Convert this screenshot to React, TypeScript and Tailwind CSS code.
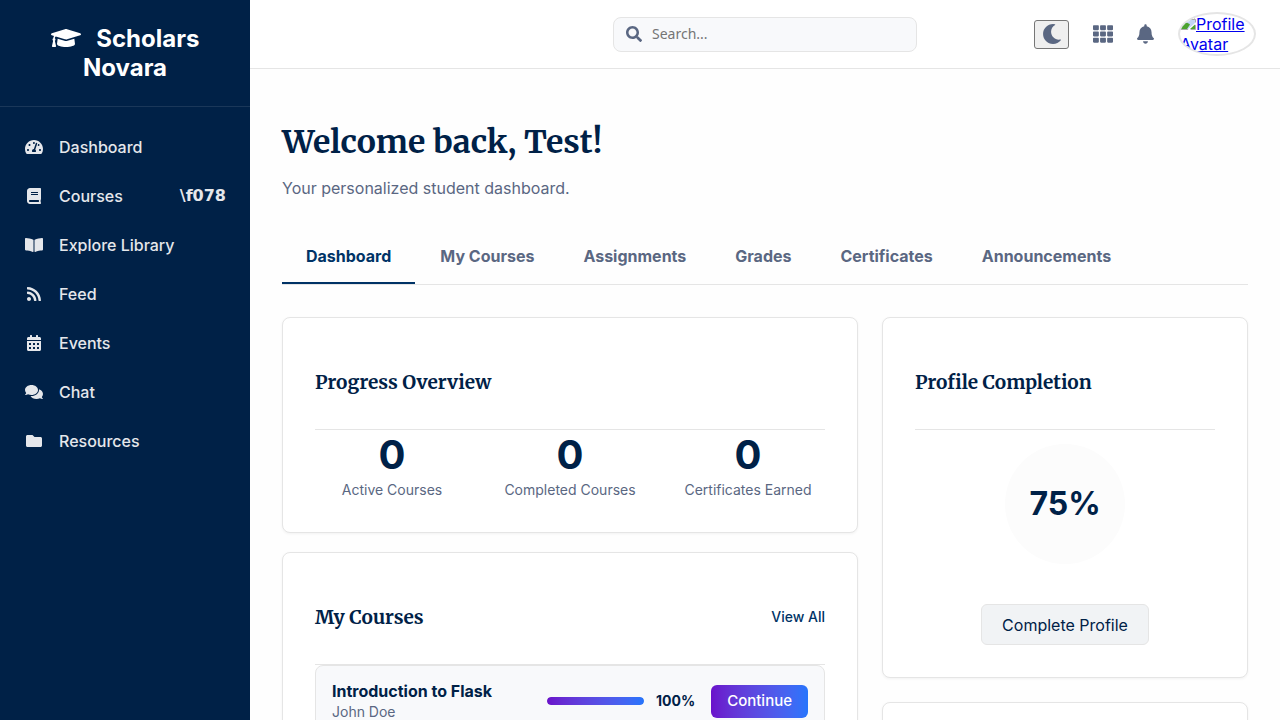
import type { ReactNode } from "react";
import type { IconType } from "react-icons";
import {
  FaBell,
  FaBook,
  FaBookOpen,
  FaCalendarAlt,
  FaComments,
  FaFolder,
  FaGraduationCap,
  FaMoon,
  FaRss,
  FaSearch,
  FaTachometerAlt,
  FaTh,
} from "react-icons/fa";

const navItems: { label: string; icon: IconType; suffix?: string }[] = [
  { label: "Dashboard", icon: FaTachometerAlt },
  { label: "Courses", icon: FaBook, suffix: "\\f078" },
  { label: "Explore Library", icon: FaBookOpen },
  { label: "Feed", icon: FaRss },
  { label: "Events", icon: FaCalendarAlt },
  { label: "Chat", icon: FaComments },
  { label: "Resources", icon: FaFolder },
];

const tabs = ["Dashboard", "My Courses", "Assignments", "Grades", "Certificates", "Announcements"];

const stats = [
  { value: 0, label: "Active Courses" },
  { value: 0, label: "Completed Courses" },
  { value: 0, label: "Certificates Earned" },
];

const courses = [{ title: "Introduction to Flask", teacher: "John Doe", progress: 100 }];

function Sidebar() {
  return (
    <aside className="w-[250px] shrink-0 bg-[#002147] text-[#e5e7eb]">
      <div className="border-b border-white/10 p-6 text-center">
        <a href="#" className="block text-2xl leading-[29px] font-bold text-white">
          <FaGraduationCap className="mr-2.5 inline h-6 w-[30px] align-[-3px]" aria-hidden /> Scholars Novara
        </a>
      </div>
      <nav className="flex flex-col pt-[15px]">
        {navItems.map(({ label, icon: Icon, suffix }) => (
          <a key={label} href="#" className="flex h-[49px] items-center px-6 font-medium">
            <span className="flex w-5 justify-center">
              <Icon className="h-4 w-[18px]" aria-hidden />
            </span>
            <span className="ml-[15px]">{label}</span>
            {suffix && <span className="ml-auto font-['DejaVu_Sans',sans-serif] font-bold">{suffix}</span>}
          </a>
        ))}
      </nav>
    </aside>
  );
}

function MissingImageIcon() {
  return (
    <svg width="16" height="16" viewBox="0 0 16 16" className="inline align-baseline" aria-hidden>
      <path d="M.5.5h10l5 5v10H.5z" fill="#fff" stroke="#a9a9a9" />
      <path d="M1 1h9v5h5v4L8 15H1z" fill="#c3d5f5" />
      <path d="M3 6.500c0-1 1-1.500 1.800-1.200C5.400 4 7.500 4.300 7.600 5.700 9 5.800 9 7.500 7.700 7.500H4C3.400 7.500 3 7 3 6.500z" fill="#fff" />
      <path d="M1 15v-3C3 8.500 7 7.500 10 10.500L7 15z" fill="#4da32f" />
      <path d="M10.500.5v5h5" fill="#fff" stroke="#a9a9a9" />
      <path d="M16 8 7.500 16H10l6-5.500z" fill="#fff" />
      <path d="M10 15h5v-4.500z" fill="#4da32f" />
    </svg>
  );
}

function TopBar() {
  return (
    <header className="flex h-[69px] shrink-0 items-center border-b border-[#e5e5e5] bg-white px-6">
      <div className="flex-1" />
      <label className="flex h-[35px] w-[304px] items-center rounded-lg border border-[#e5e5e5] bg-[#f8f9fb] px-3 text-[#5a6782]">
        <FaSearch className="size-4 shrink-0" aria-hidden />
        <input
          type="search"
          aria-label="Search"
          placeholder="Search..."
          className="ml-2.5 min-w-0 flex-1 bg-transparent font-['Noto_Sans',sans-serif] text-sm outline-none placeholder:text-[#757575]"
        />
      </label>
      <div className="flex flex-1 items-center justify-end gap-6 text-[#5a6782]">
        <button
          aria-label="Toggle dark mode"
          className="flex h-[29px] w-[35px] items-center justify-center rounded-[3px] border border-[#767676] bg-[#efefef]"
        >
          <FaMoon className="size-5" />
        </button>
        <a href="#" aria-label="Apps">
          <FaTh className="size-5" />
        </a>
        <a href="#" aria-label="Notifications">
          <FaBell className="h-5 w-[17px]" />
        </a>
        <a
          href="#"
          className="block h-11 w-[78px] overflow-hidden rounded-[50%] border-2 border-[#e5e5e5] leading-5 text-[#0000ee] underline"
        >
          <MissingImageIcon />
          Profile Avatar
        </a>
      </div>
    </header>
  );
}

function Card({ title, action, children }: { title?: string; action?: ReactNode; children?: ReactNode }) {
  return (
    <section className="rounded-lg border border-[#e5e5e5] bg-white px-8 pb-8 shadow-[0_1px_3px_rgba(0,0,0,0.05)]">
      {title && (
        <div className="flex h-28 items-center justify-between border-b border-[#e5e5e5] pt-4">
          <h2 className="font-[Merriweather,'Liberation_Serif',serif] text-[19px] leading-[30px] font-bold">{title}</h2>
          {action}
        </div>
      )}
      {children}
    </section>
  );
}

export default function App() {
  return (
    <div className="flex h-screen bg-white font-[Inter,sans-serif] text-base text-[#002147]">
      <Sidebar />
      <div className="flex min-w-0 flex-1 flex-col">
        <TopBar />
        <main className="min-h-0 flex-1 overflow-y-auto bg-[#fefefe] px-8 pt-[49px] [scrollbar-width:none]">
          <h1 className="font-[Merriweather,'Liberation_Serif',serif] text-[32px] leading-[48px] font-bold">
            Welcome back, Test!
          </h1>
          <p className="mt-2.5 text-[#5a6782]">Your personalized student dashboard.</p>

          <nav className="mt-[30px] flex gap-px border-b border-[#e5e5e5]">
            {tabs.map((tab, i) => (
              <button
                key={tab}
                className={
                  i === 0
                    ? "h-[54px] border-b-2 border-[#003366] px-6 font-bold text-[#003366]"
                    : "h-[54px] border-b-2 border-transparent px-6 font-bold text-[#5a6782]"
                }
              >
                {tab}
              </button>
            ))}
          </nav>

          <div className="mt-8 grid grid-cols-[minmax(0,1fr)_366px] items-start gap-6">
            <div className="flex flex-col gap-[19px]">
              <Card title="Progress Overview">
                <div className="grid grid-cols-3 gap-6 text-center">
                  {stats.map((s) => (
                    <div key={s.label} className="whitespace-nowrap">
                      <div className="text-[40px] leading-[50px] font-bold">{s.value}</div>
                      <div className="text-sm leading-5 text-[#5a6782]">{s.label}</div>
                    </div>
                  ))}
                </div>
              </Card>
              <Card
                title="My Courses"
                action={
                  <a href="#" className="text-sm font-medium text-[#003366]">
                    View All
                  </a>
                }
              >
                {courses.map((c) => (
                  <article
                    key={c.title}
                    className="flex items-center rounded-lg border border-[#e5e5e5] bg-[#f8f9fb] px-4 py-3.5"
                  >
                    <div className="flex-1">
                      <h3 className="leading-[22px] font-bold">{c.title}</h3>
                      <p className="text-sm text-[#5a6782]">{c.teacher}</p>
                    </div>
                    <div className="h-2 w-[97px] overflow-hidden rounded-full bg-[#e5e5e5]">
                      <div
                        className="h-full rounded-full bg-linear-to-r from-[#6a11cb] to-[#2575fc]"
                        style={{ width: `${c.progress}%` }}
                      />
                    </div>
                    <span className="ml-3 text-sm font-bold">{c.progress}%</span>
                    <button className="ml-4 h-[33px] rounded-md bg-linear-to-r from-[#6a11cb] to-[#2575fc] px-4 text-[15px] font-medium text-white">
                      Continue
                    </button>
                  </article>
                ))}
              </Card>
            </div>

            <div className="flex flex-col gap-6">
              <Card title="Profile Completion">
                <div className="flex flex-col items-center pt-3.5">
                  <div className="flex size-[120px] items-center justify-center rounded-full bg-[#fcfcfc] text-[32px] font-bold">
                    75%
                  </div>
                  <button className="mt-10 h-[41px] rounded-md border border-[#e5e5e5] bg-[#f1f3f5] px-5">
                    Complete Profile
                  </button>
                </div>
              </Card>
              <Card>
                <div className="h-40" />
              </Card>
            </div>
          </div>
        </main>
      </div>
    </div>
  );
}
